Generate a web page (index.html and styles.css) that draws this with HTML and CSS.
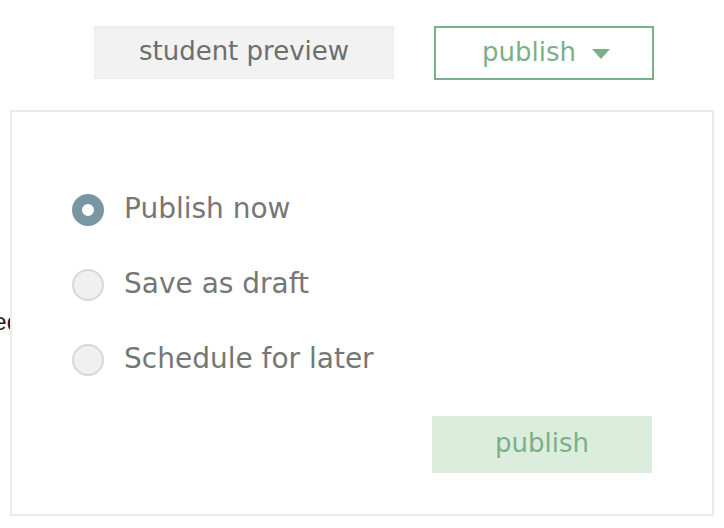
FILE: index.html
```html
<!DOCTYPE html>
<html>
<head>
<meta charset="utf-8">
<link rel="stylesheet" href="styles.css">
</head>
<body>
<div class="page">
  <span class="behind">Published</span>
  <div class="toolbar">
    <button class="btn-preview">student preview</button>
    <button class="btn-publish-menu">publish
      <svg class="caret" width="18" height="10" viewBox="0 0 18 10"><path d="M0 0 L18 0 L9 10 Z" fill="#7bb087"/></svg>
    </button>
  </div>
  <div class="panel">
    <div class="options">
      <label class="option"><span class="radio checked"></span><span class="label">Publish now</span></label>
      <label class="option"><span class="radio"></span><span class="label">Save as draft</span></label>
      <label class="option"><span class="radio"></span><span class="label">Schedule for later</span></label>
    </div>
    <div class="actions">
      <button class="btn-publish">publish</button>
    </div>
  </div>
</div>
</body>
</html>
```
FILE: styles.css
```css
html, body {
  margin: 0;
  padding: 0;
  background: #ffffff;
}
body {
  font-family: "DejaVu Sans", "Open Sans", sans-serif;
}
.page {
  position: relative;
  width: 724px;
  height: 528px;
  overflow: hidden;
}
.behind {
  position: absolute;
  right: 704px;
  top: 308px;
  font-size: 24px;
  color: #222;
  font-family: "Liberation Sans", sans-serif;
  white-space: nowrap;
}
.toolbar {
  display: flex;
  gap: 40px;
  padding: 26px 0 0 94px;
}
button {
  font-family: inherit;
  margin: 0;
  cursor: pointer;
}
.btn-preview {
  width: 300px;
  height: 53px;
  background: #f2f2f2;
  border: 1px solid #ebebeb;
  color: #6e6e6e;
  font-size: 26px;
  padding: 0 0 3px 0;
}
.btn-publish-menu {
  width: 220px;
  height: 54px;
  background: #fff;
  border: 2px solid #7bb087;
  color: #7bb087;
  font-size: 26px;
  display: flex;
  align-items: center;
  justify-content: center;
  gap: 16px;
  padding: 0 0 3px 4px;
}
.caret {
  display: block;
  margin-top: 4px;
}
.panel {
  position: relative;
  z-index: 1;
  background: #fff;
  margin: 30px 0 0 10px;
  width: 704px;
  height: 406px;
  box-sizing: border-box;
  border: 2px solid #ebebeb;
  padding: 82px 60px 0 60px;
}
.options {
  display: flex;
  flex-direction: column;
  gap: 43px;
}
.option {
  display: flex;
  align-items: center;
  gap: 20px;
  height: 32px;
}
.radio {
  width: 32px;
  height: 32px;
  box-sizing: border-box;
  border-radius: 50%;
  background: #f0f0f0;
  border: 2px solid #d8d8d8;
  flex: none;
}
.radio.checked {
  background: #fff;
  border: 10px solid #7996a5;
}
.label {
  font-size: 28px;
  color: #767676;
  padding-bottom: 4px;
}
.actions {
  display: flex;
  justify-content: flex-end;
  margin-top: 40px;
}
.btn-publish {
  width: 220px;
  height: 57px;
  background: #dcedde;
  border: none;
  color: #7bb087;
  font-size: 26px;
  padding: 0 0 3px 0;
}
```
